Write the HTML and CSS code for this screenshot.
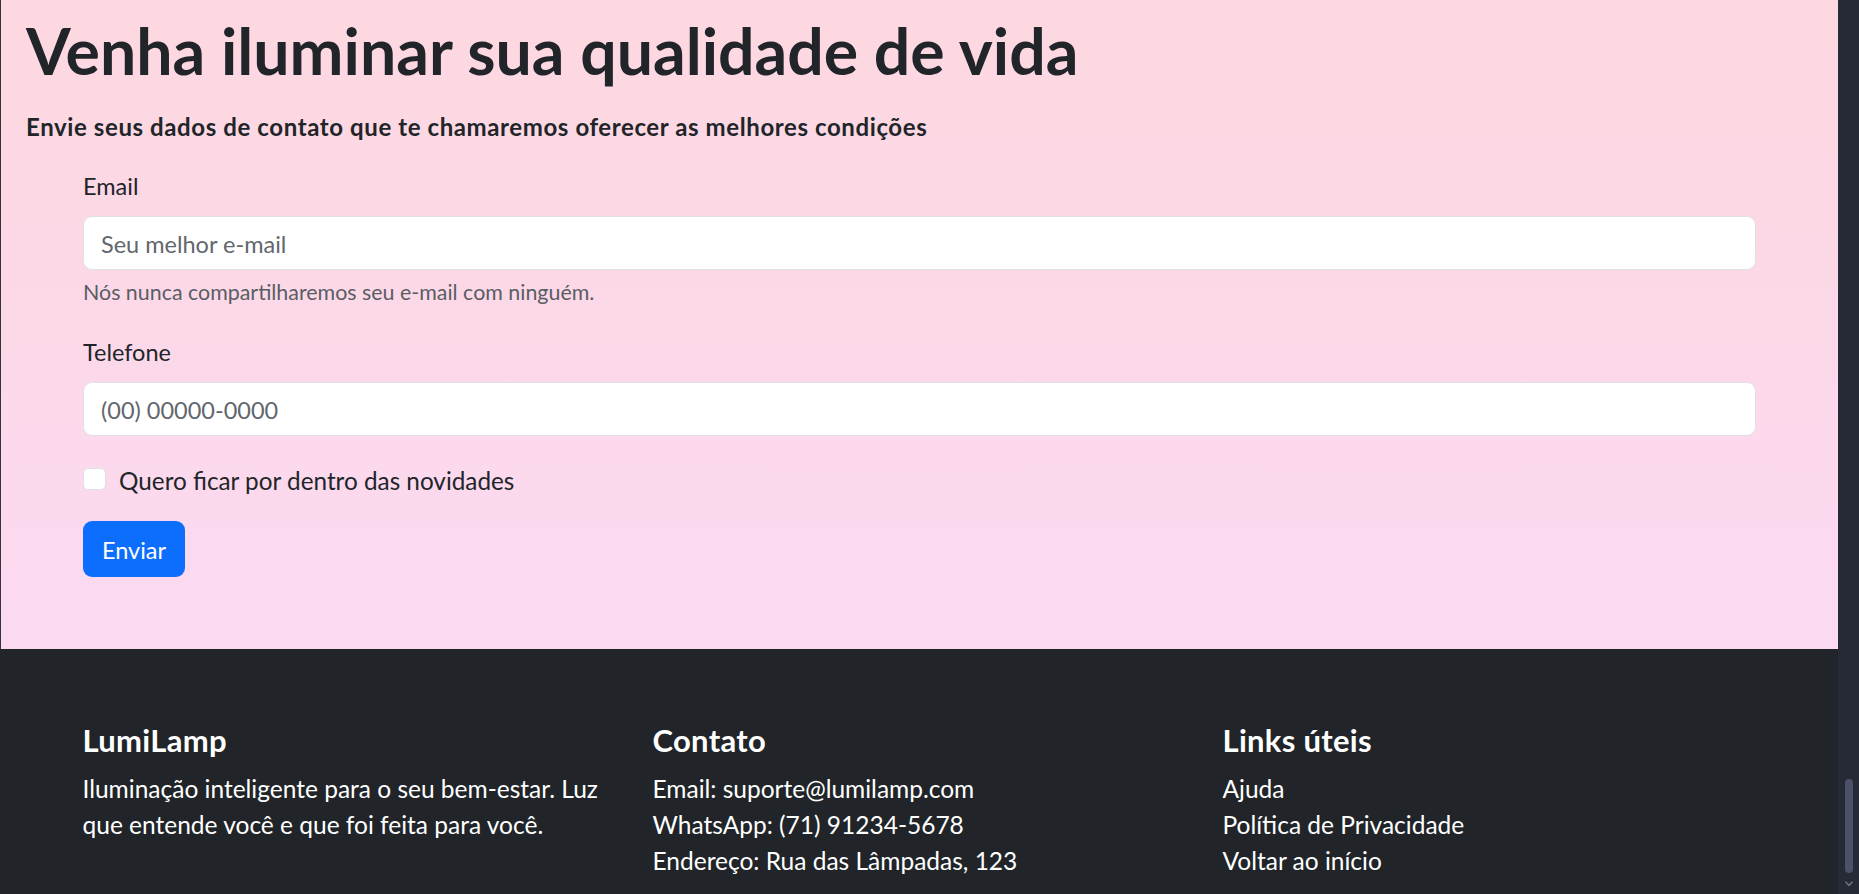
FILE: index.html
```html
<!DOCTYPE html>
<html lang="pt-BR">
<head>
<meta charset="utf-8">
<title>LumiLamp</title>
<link rel="stylesheet" href="styles.css">
</head>
<body>
<div class="page">
  <main class="content">
    <section class="hero">
      <div class="hero-head">
        <h1 class="title">Venha iluminar sua qualidade de vida</h1>
        <h2 class="subtitle">Envie seus dados de contato que te chamaremos oferecer as melhores condições</h2>
      </div>
      <form class="form">
        <div class="field">
          <label class="label" for="email">Email</label>
          <input class="input" id="email" type="email" placeholder="Seu melhor e-mail">
          <div class="help">Nós nunca compartilharemos seu e-mail com ninguém.</div>
        </div>
        <div class="field field-tel">
          <label class="label" for="tel">Telefone</label>
          <input class="input" id="tel" type="tel" placeholder="(00) 00000-0000">
        </div>
        <div class="check">
          <input class="checkbox" id="news" type="checkbox">
          <label class="check-label" for="news">Quero ficar por dentro das novidades</label>
        </div>
        <button class="btn" type="button">Enviar</button>
      </form>
    </section>
    <footer class="footer">
      <div class="footer-grid">
        <div class="col">
          <h5 class="foot-title">LumiLamp</h5>
          <p class="foot-text">Iluminação inteligente para o seu bem-estar. Luz que entende você e que foi feita para você.</p>
        </div>
        <div class="col">
          <h5 class="foot-title">Contato</h5>
          <ul class="foot-list">
            <li>Email: suporte@lumilamp.com</li>
            <li>WhatsApp: (71) 91234-5678</li>
            <li>Endereço: Rua das Lâmpadas, 123</li>
          </ul>
        </div>
        <div class="col">
          <h5 class="foot-title">Links úteis</h5>
          <ul class="foot-list">
            <li><a class="foot-link" href="#">Ajuda</a></li>
            <li><a class="foot-link" href="#">Política de Privacidade</a></li>
            <li><a class="foot-link" href="#">Voltar ao início</a></li>
          </ul>
        </div>
      </div>
    </footer>
  </main>
  <aside class="scrollbar" aria-hidden="true">
    <div class="thumb"></div>
    <div class="arrow">
      <svg width="8" height="6" viewBox="0 0 8 6"><path d="M1 1.2 L4 4.4 L7 1.2" fill="none" stroke="#6e717d" stroke-width="1.6" stroke-linecap="round" stroke-linejoin="round"/></svg>
    </div>
  </aside>
</div>
</body>
</html>
```
FILE: styles.css
```css
html, body {
  margin: 0;
  padding: 0;
  height: 100%;
  overflow: hidden;
}
body {
  font-family: Lato, "Open Sans", sans-serif;
  color: #212529;
  background: #212529;
}
.page {
  display: flex;
  height: 894px;
}
.content {
  flex: 1;
  min-width: 0;
  display: flex;
  flex-direction: column;
}
.hero {
  border-left: 1px solid #3a3237;
  background: linear-gradient(to bottom, #fdd8e0 0%, #fbd9f1 100%);
  padding: 12px 0 72px 0;
}
.hero-head {
  padding-left: 25px;
}
.title {
  margin: 0;
  font-size: 64.4px;
  line-height: 76px;
  font-weight: 700;
  color: #212529;
}
.subtitle {
  margin: 23px 0 0;
  font-size: 24px;
  line-height: 32px;
  font-weight: 700;
  letter-spacing: 0.6px;
  color: #212529;
}
.form {
  width: 1673px;
  margin: 27px auto 0;
}
.label {
  display: block;
  font-size: 23.5px;
  line-height: 33px;
  margin-bottom: 13px;
}
.input {
  display: block;
  width: 100%;
  height: 54px;
  box-sizing: border-box;
  border: 1px solid #dee2e6;
  border-radius: 9px;
  padding: 2px 17px 0;
  font-family: Lato, "Open Sans", sans-serif;
  font-size: 23.5px;
  line-height: 50px;
  color: #212529;
  background: #fff;
  outline: none;
}
.input::placeholder {
  color: #62676d;
  opacity: 1;
}
.help {
  margin-top: 7px;
  font-size: 21.4px;
  line-height: 30px;
  color: #5a5d63;
}
.field-tel {
  margin-top: 29px;
}
.check {
  margin-top: 28px;
  display: flex;
  align-items: flex-start;
  gap: 13px;
}
.checkbox {
  appearance: none;
  -webkit-appearance: none;
  width: 23px;
  height: 22px;
  margin: 4px 0 0;
  border: 1px solid #dee2e6;
  border-radius: 5px;
  background: #fff;
  flex: none;
}
.check-label {
  font-size: 24.3px;
  line-height: 33px;
}
.btn {
  display: block;
  margin-top: 24px;
  height: 56px;
  padding: 3px 19px 0;
  line-height: 53px;
  font-family: Lato, "Open Sans", sans-serif;
  font-size: 23.5px;
  color: #fff;
  background: #0d6efd;
  border: none;
  border-radius: 9px;
}
.footer {
  flex: 1;
  background: #212529;
  color: #fff;
  padding: 74px 0 15px;
}
.footer-grid {
  width: 1673px;
  margin: 0 auto;
  display: grid;
  grid-template-columns: repeat(3, 1fr);
  column-gap: 37px;
}
.foot-title {
  margin: 0;
  font-size: 31px;
  line-height: 34px;
  font-weight: 700;
  letter-spacing: 0.3px;
}
.foot-text {
  margin: 14px 0 0;
  font-size: 24.5px;
  line-height: 36px;
  max-width: 525px;
}
.foot-list {
  list-style: none;
  margin: 14px 0 0;
  padding: 0;
  font-size: 24.5px;
  line-height: 36px;
}
.foot-link {
  color: #fff;
  text-decoration: none;
}
.scrollbar {
  width: 21px;
  flex: none;
  background: #262936;
  display: flex;
  flex-direction: column;
  justify-content: flex-end;
}
.thumb {
  width: 8px;
  height: 94px;
  margin-left: 7px;
  border-radius: 4px;
  background: #4d5069;
}
.arrow {
  height: 21px;
  display: flex;
  align-items: center;
  justify-content: center;
}
```
